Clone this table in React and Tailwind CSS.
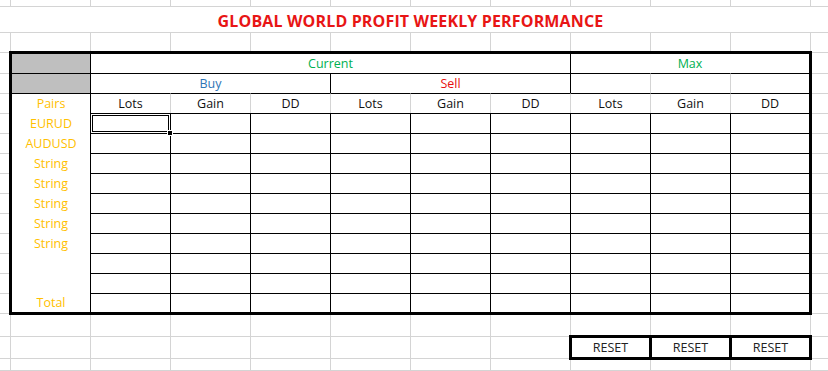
import React from "react";

const GRID =
  "grid grid-cols-[11px_repeat(10,80px)_17px] grid-rows-[7px_26px_20px_21px_repeat(12,20px)_23px_22px_12px]";

function SheetLines() {
  const cells = [];
  for (let r = 0; r < 19; r++) {
    for (let c = 0; c < 12; c++) {
      cells.push(
        <div
          key={r + "-" + c}
          className={
            c === 11
              ? "border-b border-[#d4d4d4]"
              : "border-r border-b border-[#d4d4d4]"
          }
        />
      );
    }
  }
  return <div className={"col-start-1 row-start-1 " + GRID}>{cells}</div>;
}

const labels = ["EURUD", "AUDUSD", "String", "String", "String", "String", "String", "", "", "Total"];
const heads = ["Lots", "Gain", "DD", "Lots", "Gain", "DD", "Lots", "Gain", "DD"];

function Table() {
  return (
    <div className="col-[2/12] row-[4/17] -ml-[2px] -mr-[1px] -mt-[2px] -mb-[1px] border-[3px] border-black bg-white grid grid-cols-[78px_repeat(8,80px)_79px] grid-rows-[19px_repeat(11,20px)_19px] text-[12.5px] leading-none text-[#111]">
      {/* row 1 */}
      <div className="bg-[#bfbfbf]" />
      <div className="col-span-6 border-l border-black flex items-center justify-center pt-[2px] text-[#00b050]">
        Current
      </div>
      <div className="col-span-3 border-l border-black flex items-center justify-center pt-[2px] text-[#00b050]">
        Max
      </div>
      {/* row 2 */}
      <div className="bg-[#bfbfbf] border-t border-black" />
      <div className="col-span-3 border-l border-t border-black flex items-center justify-center pt-[2px] text-[#2e75b6]">
        Buy
      </div>
      <div className="col-span-3 border-l border-t border-black flex items-center justify-center pt-[2px] text-[#e81010]">
        Sell
      </div>
      <div className="border-l border-t border-black" />
      <div className="border-t border-t-black border-l border-l-[#d4d4d4]" />
      <div className="border-t border-t-black border-l border-l-[#d4d4d4]" />
      {/* row 3 header */}
      <div className="border-t border-black flex items-center justify-center pt-[2px] text-[#ffc000]">
        Pairs
      </div>
      {heads.map((h, i) => (
        <div
          key={"h" + i}
          className={
            i === 0
              ? "border-l border-t border-black flex items-center justify-center pt-[2px]"
              : "border-t border-t-black border-l border-l-[#d4d4d4] flex items-center justify-center pt-[2px]"
          }
        >
          {h}
        </div>
      ))}
      {/* data rows */}
      {labels.map((lab, r) => (
        <React.Fragment key={"r" + r}>
          <div className="flex items-center justify-center pt-[2px] text-[#ffc000]">{lab}</div>
          {heads.map((_, c) =>
            r === 0 && c === 0 ? (
              <div key={"c" + c} className="relative border-l border-t border-black">
                <div className="m-[1px] h-[17px] border border-black" />
                <div className="absolute right-[-3px] bottom-[-3px] z-10 w-[6px] h-[6px] bg-black border border-white" />
              </div>
            ) : (
              <div key={"c" + c} className="border-l border-t border-black" />
            )
          )}
        </React.Fragment>
      ))}
    </div>
  );
}

function Resets() {
  return (
    <div className="col-[9/12] row-[18/19] -ml-[2px] -mr-[1px] -mt-[2px] -mb-[1px] border-[3px] border-black bg-white grid grid-cols-[77px_80px_80px] text-[12.5px] leading-none text-[#222]">
      <div className="flex items-center justify-center pt-[2px]">RESET</div>
      <div className="border-l-[3px] border-black flex items-center justify-center pt-[2px]">RESET</div>
      <div className="border-l-[3px] border-black flex items-center justify-center pt-[2px]">RESET</div>
    </div>
  );
}

export default function App() {
  return (
    <div className="grid w-[828px] h-[371px] overflow-hidden bg-white font-['Open_Sans','Liberation_Sans',Arial,sans-serif]">
      <SheetLines />
      <div className={"col-start-1 row-start-1 " + GRID}>
        <div className="col-[1/-1] row-[2/3] bg-white border-b border-[#d4d4d4] flex items-center justify-center pr-[7px] pt-[2px]">
          <span className="text-[16px] font-bold tracking-[0.15px] text-[#e81515] leading-none">
            GLOBAL WORLD PROFIT WEEKLY PERFORMANCE
          </span>
        </div>
        <Table />
        <Resets />
      </div>
    </div>
  );
}
